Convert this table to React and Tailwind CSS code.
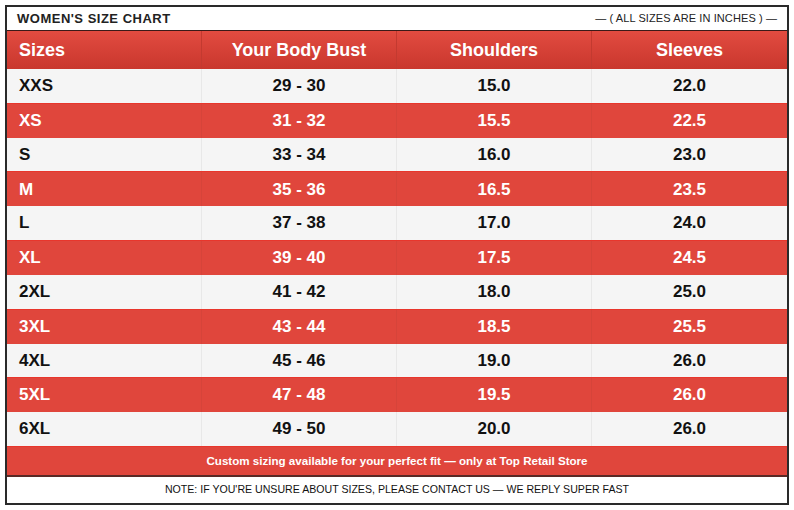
import React from "react";

const rows = [
  ["XXS", "29 - 30", "15.0", "22.0"],
  ["XS", "31 - 32", "15.5", "22.5"],
  ["S", "33 - 34", "16.0", "23.0"],
  ["M", "35 - 36", "16.5", "23.5"],
  ["L", "37 - 38", "17.0", "24.0"],
  ["XL", "39 - 40", "17.5", "24.5"],
  ["2XL", "41 - 42", "18.0", "25.0"],
  ["3XL", "43 - 44", "18.5", "25.5"],
  ["4XL", "45 - 46", "19.0", "26.0"],
  ["5XL", "47 - 48", "19.5", "26.0"],
  ["6XL", "49 - 50", "20.0", "26.0"],
];

export default function App() {
  return (
    <div
      className="w-[794px] h-[510px] bg-white p-[5px]"
      style={{ fontFamily: '"Liberation Sans", Arial, sans-serif' }}
    >
      <div className="h-[500px] border-2 border-[#2a2a2a] flex flex-col bg-white">
        <div className="h-[24px] flex items-center justify-between pl-[10px] pr-[10px] border-b border-[#3a1a18]">
          <span className="text-[13px] font-bold text-[#222] tracking-[0.5px]">WOMEN'S SIZE CHART</span>
          <span className="text-[11px] text-[#222] tracking-[0.1px]">— ( ALL SIZES ARE IN INCHES ) —</span>
        </div>
        <div className="h-[38px] grid grid-cols-4 bg-gradient-to-b from-[#e24b40] to-[#c9372d] text-white text-[18px] font-bold">
          <div className="flex items-center pl-[12px] border-r border-[#c33a30]">Sizes</div>
          <div className="flex items-center justify-center border-r border-[#c33a30]">Your Body Bust</div>
          <div className="flex items-center justify-center border-r border-[#c33a30]">Shoulders</div>
          <div className="flex items-center justify-center">Sleeves</div>
        </div>
        <div className="flex-1 flex flex-col">
          {rows.map((r, i) => {
            const red = i % 2 === 1;
            return (
              <div
                key={r[0]}
                className={
                  red
                    ? "flex-1 grid grid-cols-4 bg-[#e0463c] text-white text-[17px] font-bold border-t border-[#e8362c]"
                    : "flex-1 grid grid-cols-4 bg-[#f5f5f5] text-[#111] text-[17px] font-bold"
                }
              >
                <div className={red ? "flex items-center pl-[12px] border-r border-[#d6443a]" : "flex items-center pl-[12px] border-r border-[#e8e8e8]"}>{r[0]}</div>
                <div className={red ? "flex items-center justify-center border-r border-[#d6443a]" : "flex items-center justify-center border-r border-[#e8e8e8]"}>{r[1]}</div>
                <div className={red ? "flex items-center justify-center border-r border-[#d6443a]" : "flex items-center justify-center border-r border-[#e8e8e8]"}>{r[2]}</div>
                <div className="flex items-center justify-center">{r[3]}</div>
              </div>
            );
          })}
        </div>
        <div className="h-[31px] bg-[#e0463c] border-t border-[#e8362c] border-b-2 border-b-[#5a2a26] flex items-center justify-center text-white text-[11.6px] font-bold">
          Custom sizing available for your perfect fit — only at Top Retail Store
        </div>
        <div className="h-[26px] flex items-center justify-center text-[10.6px] text-[#111]">
          NOTE: IF YOU'RE UNSURE ABOUT SIZES, PLEASE CONTACT US — WE REPLY SUPER FAST
        </div>
      </div>
    </div>
  );
}
